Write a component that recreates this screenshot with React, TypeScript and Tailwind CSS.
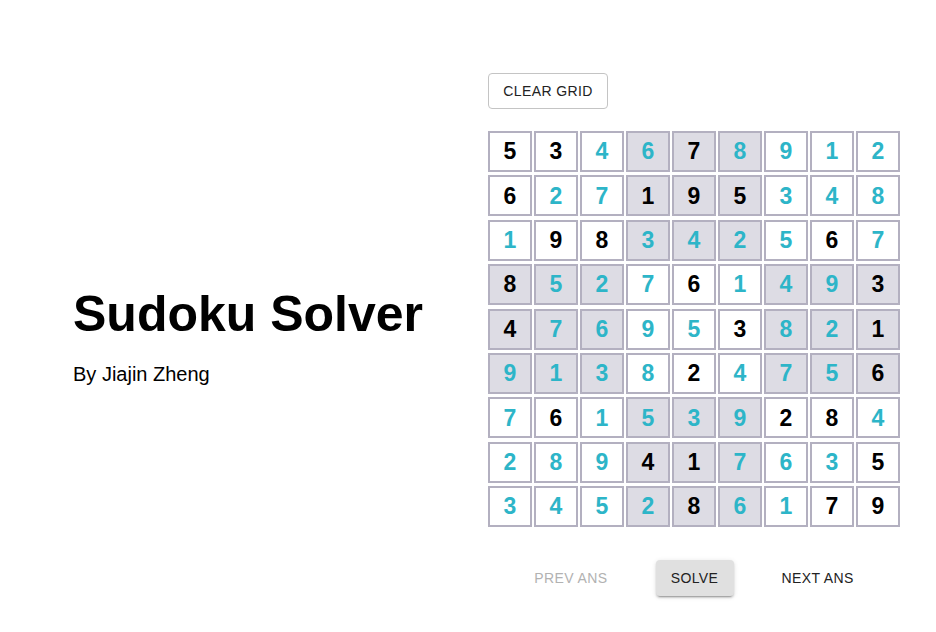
import React from 'react';

const BOARD = [
  '534678912',
  '627195348',
  '198342567',
  '852761493',
  '476953821',
  '913824756',
  '761539284',
  '289417635',
  '345286179',
];

// 1 = given (black), 0 = solved (teal)
const GIVEN = [
  '110010000',
  '100111000',
  '011000010',
  '100010001',
  '100001001',
  '000010001',
  '010000110',
  '000110001',
  '000010011',
];

function isShaded(r: number, c: number) {
  const br = Math.floor(r / 3);
  const bc = Math.floor(c / 3);
  return (br + bc) % 2 === 1;
}

function Cell({ value, given, shaded }: { value: string; given: boolean; shaded: boolean }) {
  return (
    <div
      className={
        'flex h-[41px] w-[44px] items-center justify-center border-2 border-[#b3b0c0] text-[23px] font-bold ' +
        (shaded ? 'bg-[#dddce4] ' : 'bg-white ') +
        (given ? 'text-black' : 'text-[#2db5c8]')
      }
    >
      {value}
    </div>
  );
}

export default function App() {
  return (
    <div
      className="flex h-[632px] w-full items-center bg-white pt-[37px] text-black"
      style={{ fontFamily: '"Liberation Sans", Arial, sans-serif' }}
    >
      <div className="w-[488px] pl-[73px]">
        <h1 className="text-[50px] font-bold leading-[60px]">Sudoku Solver</h1>
        <p className="mt-[18px] text-[20px] leading-[24px]">By Jiajin Zheng</p>
      </div>

      <div className="flex w-[412px] flex-col">
        <div>
          <button className="h-[36px] w-[120px] rounded-[4px] border border-[#c4c4c4] pt-px text-[14px] tracking-[0.4px] text-[#222]">
            CLEAR GRID
          </button>
        </div>

        <div className="mt-[22px] grid grid-cols-[repeat(9,44px)] gap-x-[2px] gap-y-[3.4px]">
          {BOARD.map((row, r) =>
            row.split('').map((v, c) => (
              <Cell key={r + '-' + c} value={v} given={GIVEN[r][c] === '1'} shaded={isShaded(r, c)} />
            ))
          )}
        </div>

        <div className="mt-[33px] flex items-center justify-center gap-10">
          <button className="h-[36px] px-2 text-[14px] tracking-[0.4px] text-[#b2b2b2]" disabled>
            PREV ANS
          </button>
          <button className="h-[36px] w-[78px] rounded-[4px] bg-[#e0e0e0] text-[14px] tracking-[0.4px] text-[#222] shadow-[0_3px_1px_-2px_rgba(0,0,0,0.2),0_2px_2px_0_rgba(0,0,0,0.14),0_1px_5px_0_rgba(0,0,0,0.12)]">
            SOLVE
          </button>
          <button className="h-[36px] px-2 text-[14px] tracking-[0.4px] text-[#222]">
            NEXT ANS
          </button>
        </div>
      </div>
    </div>
  );
}
